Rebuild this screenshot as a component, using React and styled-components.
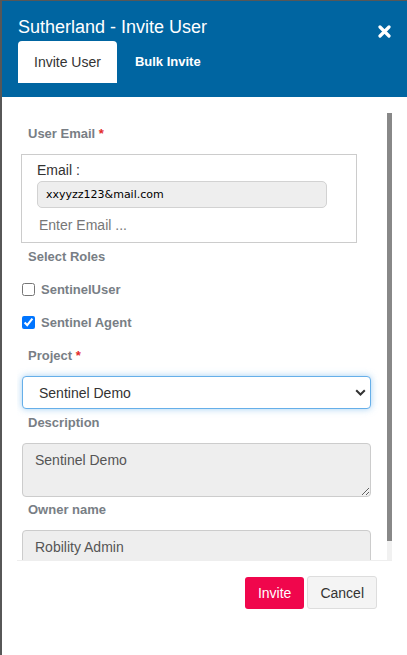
import React from "react";
import styled, { createGlobalStyle } from "styled-components";

const GlobalStyle = createGlobalStyle`
  html, body {
    margin: 0;
    padding: 0;
    font-family: "Liberation Sans", Arial, sans-serif;
  }
  * { box-sizing: border-box; }
`;

function CloseIcon() {
  return (
    <svg width="13" height="13" viewBox="0 0 13 13">
      <path
        d="M2 2 L11 11 M11 2 L2 11"
        stroke="#fff"
        strokeWidth="3.2"
        strokeLinecap="round"
      />
    </svg>
  );
}

function Chevron() {
  return (
    <svg width="11" height="7" viewBox="0 0 11 7">
      <path d="M1.2 1.2 L5.5 5.5 L9.8 1.2" stroke="#333" strokeWidth="2" fill="none" />
    </svg>
  );
}

export default function App() {
  return (
    <>
      <GlobalStyle />
      <Backdrop>
        <Modal>
          <Header>
            <TitleRow>
              <Title>Sutherland - Invite User</Title>
              <CloseButton aria-label="close">
                <CloseIcon />
              </CloseButton>
            </TitleRow>
            <Tabs>
              <Tab $active>Invite User</Tab>
              <Tab>Bulk Invite</Tab>
            </Tabs>
          </Header>

          <Body>
            <Scroll>
              <Viewport>
                <Form>
                  <Label>
                    User Email <Req>*</Req>
                  </Label>
                  <EmailBox>
                    <EmailCaption>Email :</EmailCaption>
                    <Chip>xxyyzz123&amp;mail.com</Chip>
                    <EmailInput placeholder="Enter Email ..." />
                  </EmailBox>

                  <Label $top={5}>Select Roles</Label>
                  <CheckRow $top={7}>
                    <input type="checkbox" />
                    <span>SentinelUser</span>
                  </CheckRow>
                  <CheckRow>
                    <input type="checkbox" defaultChecked />
                    <span>Sentinel Agent</span>
                  </CheckRow>

                  <Label $top={8}>
                    Project <Req>*</Req>
                  </Label>
                  <SelectWrap>
                    <Select defaultValue="demo">
                      <option value="demo">Sentinel Demo</option>
                    </Select>
                    <ChevronSlot>
                      <Chevron />
                    </ChevronSlot>
                  </SelectWrap>

                  <Label $top={5}>Description</Label>
                  <TextArea readOnly defaultValue="Sentinel Demo" />

                  <Label $top={4}>Owner name</Label>
                  <ReadInput readOnly defaultValue="Robility Admin" />
                </Form>
              </Viewport>
              <Track>
                <Thumb />
              </Track>
            </Scroll>

            <Footer>
              <PrimaryButton>Invite</PrimaryButton>
              <SecondaryButton>Cancel</SecondaryButton>
            </Footer>
          </Body>
        </Modal>
      </Backdrop>
    </>
  );
}

const Backdrop = styled.div`
  height: 655px;
  background: #575757;
  padding: 1px 0 0 2px;
`;

const Modal = styled.div`
  height: 100%;
  background: #fff;
  display: flex;
  flex-direction: column;
`;

const Header = styled.div`
  background: #0065a1;
  padding: 15px 16px 14px 16px;
`;

const TitleRow = styled.div`
  display: flex;
  justify-content: space-between;
  align-items: flex-start;
`;

const Title = styled.h4`
  margin: 0;
  font-size: 18px;
  line-height: 22px;
  font-weight: 400;
  color: #fff;
`;

const CloseButton = styled.button`
  background: none;
  border: 0;
  padding: 0;
  margin-top: 9px;
  display: flex;
  cursor: pointer;
`;

const Tabs = styled.div`
  display: flex;
  margin-top: 3px;
`;

const Tab = styled.div`
  padding: 10px ${(p) => (p.$active ? "16px" : "18px")};
  line-height: 22px;
  font-size: ${(p) => (p.$active ? "14px" : "13px")};
  font-weight: ${(p) => (p.$active ? 400 : 700)};
  color: ${(p) => (p.$active ? "#333" : "#fff")};
  background: ${(p) => (p.$active ? "#fff" : "transparent")};
  border-radius: 4px 4px 0 0;
  cursor: pointer;
`;

const Body = styled.div`
  flex: 1;
  display: flex;
  flex-direction: column;
  padding: 16px 15px 0 15px;
`;

const Scroll = styled.div`
  height: 447px;
  display: flex;
`;

const Viewport = styled.div`
  flex: 1;
  overflow: hidden;
`;

const Track = styled.div`
  width: 5px;
  background: #f1f1f1;
`;

const Thumb = styled.div`
  height: 428px;
  background: #888;
`;

const Form = styled.div`
  display: flex;
  flex-direction: column;
  padding: 12px 16px 16px 5px;
`;

const Label = styled.div`
  margin: ${(p) => p.$top || 0}px 0 0 6px;
  font-size: 13px;
  line-height: 18px;
  font-weight: 700;
  color: #787e85;
`;

const Req = styled.span`
  color: #e32b2b;
`;

const EmailBox = styled.div`
  margin-top: 11px;
  margin-left: -1px;
  width: 336px;
  border: 1px solid #ccc;
  padding: 6px 0 4px 15px;
  display: flex;
  flex-direction: column;
  align-items: flex-start;
`;

const EmailCaption = styled.div`
  font-size: 14px;
  line-height: 18px;
  color: #333;
`;

const Chip = styled.div`
  margin-top: 2px;
  width: 290px;
  height: 27px;
  padding-left: 8px;
  display: flex;
  align-items: center;
  background: #eee;
  border: 1px solid #d2d2d2;
  border-radius: 5px;
  font-family: "DejaVu Sans", Verdana, sans-serif;
  font-size: 11px;
  color: #000;
`;

const EmailInput = styled.input`
  margin-top: 4px;
  height: 26px;
  width: 290px;
  border: 0;
  outline: none;
  padding: 0 0 0 2px;
  font-family: inherit;
  font-size: 14px;
  color: #333;
  background: transparent;

  &::placeholder {
    color: #777;
  }
`;

const CheckRow = styled.label`
  margin-top: ${(p) => p.$top || 0}px;
  height: 33px;
  display: flex;
  align-items: center;
  gap: 6px;
  font-size: 13px;
  font-weight: 700;
  color: #787e85;

  input {
    margin: 0;
    width: 13px;
    height: 13px;
  }
`;

const SelectWrap = styled.div`
  position: relative;
  margin-top: 11px;
`;

const Select = styled.select`
  appearance: none;
  width: 100%;
  height: 33px;
  padding: 0 30px 0 16px;
  font-family: inherit;
  font-size: 14px;
  color: #333;
  background: #fff;
  border: 1px solid #66afe9;
  border-radius: 4px;
  box-shadow: 0 0 7px rgba(102, 175, 233, 0.6);
  outline: none;
`;

const ChevronSlot = styled.span`
  position: absolute;
  right: 5px;
  top: 13px;
  display: flex;
  pointer-events: none;
`;

const TextArea = styled.textarea`
  margin-top: 11px;
  width: 100%;
  height: 54px;
  padding: 8px 12px;
  font-family: inherit;
  font-size: 14px;
  color: #555;
  background: #eee;
  border: 1px solid #ccc;
  border-radius: 4px;
  outline: none;
`;

const ReadInput = styled.input`
  margin-top: 11px;
  width: 100%;
  height: 34px;
  padding: 0 12px;
  font-family: inherit;
  font-size: 14px;
  color: #555;
  background: #eee;
  border: 1px solid #ccc;
  border-radius: 4px;
  outline: none;
`;

const Footer = styled.div`
  border-top: 1px solid #eee;
  display: flex;
  justify-content: flex-end;
  align-items: center;
  gap: 3px;
  padding: 15px 15px 0 0;
`;

const PrimaryButton = styled.button`
  height: 32px;
  padding: 0 13px;
  border: 0;
  border-radius: 3px;
  background: #f0064c;
  color: #fff;
  font-family: inherit;
  font-size: 14px;
  cursor: pointer;
`;

const SecondaryButton = styled.button`
  height: 33px;
  padding: 0 12px;
  border: 1px solid #ddd;
  border-radius: 3px;
  background: #f4f4f4;
  color: #333;
  font-family: inherit;
  font-size: 14px;
  cursor: pointer;
`;
